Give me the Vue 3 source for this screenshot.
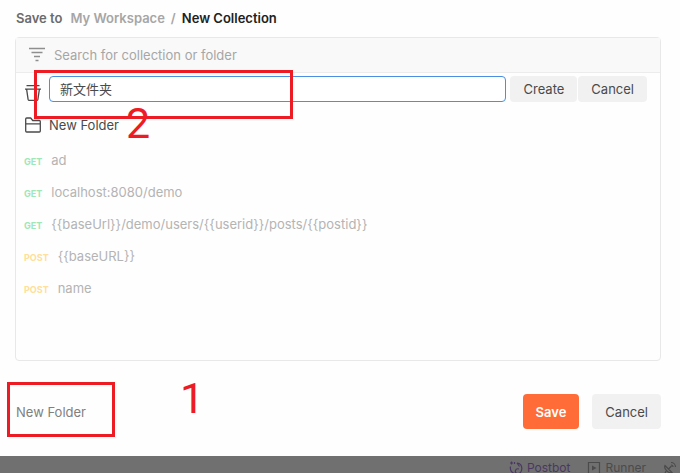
<script setup>
import { ref } from 'vue'

const search = ref('')
const folderName = ref('新文件夹')
const requests = [
  { method: 'GET', name: 'ad' },
  { method: 'GET', name: 'localhost:8080/demo' },
  { method: 'GET', name: '{{baseUrl}}/demo/users/{{userid}}/posts/{{postid}}' },
  { method: 'POST', name: '{{baseURL}}' },
  { method: 'POST', name: 'name' },
]
</script>

<template>
  <div class="page">
    <main class="dialog">
      <nav class="crumbs" aria-label="Save to">
        <span class="lead">Save to</span>
        <a href="#" class="workspace">My Workspace</a>
        <span class="slash">/</span>
        <span class="current">New Collection</span>
      </nav>

      <section class="panel">
        <label class="search">
          <svg width="18" height="16" viewBox="0 0 18 16" fill="none" stroke="#8e8e8e" stroke-width="1.3" aria-hidden="true">
            <path d="M1 1.500h16M3.500 5.500h11M6 9.500h6M7.500 13.500h3" />
          </svg>
          <input v-model="search" type="text" placeholder="Search for collection or folder" />
        </label>

        <form class="create" @submit.prevent>
          <svg class="collection" width="18" height="18" viewBox="0 0 18 18" fill="none" stroke="#4a4a4a" stroke-width="1.3" aria-hidden="true">
            <path d="M2.500 1.700h13M1 5.200h16M2.600 5.200l1.500 10.200q.2 1 1.200 1h7.400q1 0 1.200-1L15.400 5.200" />
          </svg>
          <input v-model="folderName" type="text" aria-label="Folder name" />
          <button type="submit">Create</button>
          <button type="button">Cancel</button>
        </form>

        <div class="folder">
          <svg width="18" height="18" viewBox="0 0 18 18" fill="none" stroke="#4a4a4a" stroke-width="1.3" stroke-linejoin="round" aria-hidden="true">
            <path d="M1.700 15V3q0-1 1-1h4l2 2.500h6.600q1 0 1 1V15q0 1-1 1H2.700q-1 0-1-1zM1.700 7.800h14.600" />
          </svg>
          <span>New Folder</span>
        </div>

        <ul class="requests">
          <li v-for="r in requests" :key="r.name">
            <span class="method" :class="r.method.toLowerCase()">{{ r.method }}</span>
            <span>{{ r.name }}</span>
          </li>
        </ul>
        <div class="mark mark-name" aria-hidden="true"><span>2</span></div>
      </section>

      <footer class="actions">
        <button type="button" class="new-folder">New Folder</button>
        <button type="button" class="save">Save</button>
        <button type="button" class="cancel">Cancel</button>
        <div class="mark mark-new" aria-hidden="true"><span>1</span></div>
      </footer>
    </main>

    <div class="statusbar">
      <span class="status postbot">
        <svg width="14" height="14" viewBox="0 0 14 14" fill="none" stroke="currentColor" stroke-width="1.2" aria-hidden="true">
          <path d="M1.500 5.500C.8 9 2.500 12 6 12.500M8 2c3.500 0 5 3 4.800 6-.3 3-2 4.500-4 4.500-2 0-2.800-1.500-2.300-3C7 8 8.500 7.500 10 8M8 2l2.500 3.500" />
          <path d="M2.500.5v3M1 2h3M5.500 1v2" />
        </svg>
        Postbot
      </span>
      <span class="status">
        <svg width="14" height="14" viewBox="0 0 14 14" fill="none" stroke="currentColor" stroke-width="1.2" aria-hidden="true">
          <path d="M1.500 1.500h11v11h-11z" />
          <path d="M5 4.500v5L9.500 7z" fill="currentColor" stroke="none" />
        </svg>
        Runner
      </span>
      <span class="status">
        <svg width="14" height="14" viewBox="0 0 14 14" fill="none" stroke="currentColor" stroke-width="1.2" aria-hidden="true">
          <path d="M2 4.500c-1.500 3 3.500 8.500 7 7zM5.500 8l3-3M8 1.500c2.500 0 4.500 2 4.500 4.500M8 4c1.200 0 2 .8 2 2M3 10l-1.500 3.500H6" />
        </svg>
      </span>
    </div>
  </div>
</template>

<style>
body {
  margin: 0;
  overflow: hidden;
}
</style>

<style scoped>
.page {
  display: flex;
  flex-direction: column;
  height: 100vh;
  overflow: hidden;
  background: #707070;
  color: #4a4a4a;
  font: 13px/20px Inter, "Noto Sans CJK SC", sans-serif;
}

button,
input {
  box-sizing: border-box;
  margin: 0;
  font: inherit;
  color: inherit;
}

button {
  border: 0;
  border-radius: 4px;
  background: #f1f1f1;
}

svg {
  flex: none;
}

.dialog {
  flex: 1;
  display: flex;
  flex-direction: column;
  padding: 8px 19px 0 15px;
  background: #fefefe;
}

.crumbs {
  display: flex;
  padding-left: 1px;
  font-weight: 600;
}

.lead {
  margin-right: 8px;
  color: #6b6b6b;
}

.workspace {
  color: #a6a6a6;
  text-decoration: none;
}

.slash {
  margin: 0 6px;
  color: #a6a6a6;
}

.current {
  color: #212121;
}

.panel {
  position: relative;
  flex: 1;
  margin-top: 9px;
  border: 1px solid #e8e8e8;
  border-radius: 4px;
}

.search {
  display: flex;
  align-items: center;
  gap: 8px;
  height: 34px;
  padding: 0 12px;
  border-bottom: 1px solid #ececec;
  background: #f9f9f9;
}

.search input {
  flex: 1;
  min-width: 0;
  padding: 0;
  border: 0;
  outline: 0;
  background: transparent;
}

.search input::placeholder {
  color: #a6a6a6;
  opacity: 1;
}

.create {
  display: flex;
  align-items: center;
  gap: 1px;
  padding: 3px 13px 0 8px;
}

.collection {
  margin: 8px 6px 0 0;
}

.create input {
  flex: 1;
  min-width: 0;
  height: 26px;
  margin-right: 3px;
  padding: 0 10px 2px;
  border: 1px solid #4a90e2;
  border-radius: 4px;
  outline: 0;
  background: #fff;
}

.create button {
  height: 26px;
  padding: 0 13px;
}

.folder {
  display: flex;
  align-items: center;
  gap: 7px;
  margin-top: 13px;
  padding: 0 8px;
}

.requests {
  margin: 9px 0 0;
  padding: 0 8px;
  list-style: none;
  color: #b4b4b4;
}

.requests li {
  display: flex;
  align-items: center;
  gap: 9px;
  height: 32px;
}

.method {
  padding-top: 3px;
  font-size: 9px;
  font-weight: 700;
}

.get {
  color: #9fe6b8;
}

.post {
  color: #ffdf99;
}

.actions {
  position: relative;
  display: flex;
  align-items: center;
  gap: 13px;
  padding: 33px 0 27px 1px;
}

.new-folder {
  margin-right: auto;
  padding: 0;
  background: none;
  color: #808080;
}

.save,
.cancel {
  height: 35px;
  padding: 0 13px;
}

.save {
  background: #ff6c37;
  color: #fff;
  font-weight: 600;
}

.mark {
  position: absolute;
  box-sizing: border-box;
  border: 3px solid #ed1c24;
  color: #ed1c24;
  font: 43px/44px Roboto, sans-serif;
  pointer-events: none;
}

.mark span {
  position: absolute;
}

.mark-name {
  top: 32px;
  left: 18px;
  width: 259px;
  height: 49px;
}

.mark-name span {
  top: 28px;
  left: 89px;
}

.mark-new {
  top: 21px;
  left: -8px;
  width: 108px;
  height: 55px;
}

.mark-new span {
  top: -9px;
  left: 170px;
}

.statusbar {
  display: flex;
  justify-content: flex-end;
  gap: 17px;
  height: 17px;
  padding: 2px 3px 0 0;
  box-sizing: border-box;
  overflow: hidden;
  color: #4b4b4b;
  font-size: 12px;
}

.status {
  display: flex;
  align-items: center;
  gap: 4px;
  height: 20px;
}

.postbot {
  color: #4a3862;
}
</style>
